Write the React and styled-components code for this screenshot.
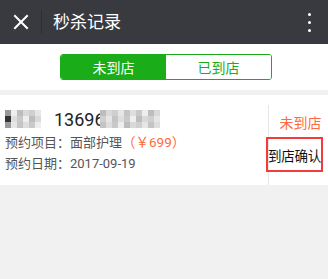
import React, { useState } from "react";
import styled, { createGlobalStyle } from "styled-components";

const GlobalStyle = createGlobalStyle`
  html, body {
    margin: 0;
    padding: 0;
    background: #f1f1f1;
    font-family: Roboto, "Noto Sans CJK SC", sans-serif;
  }
`;

const Page = styled.div`
  width: 328px;
  min-height: 279px;
  background: #f1f1f1;
`;

const Header = styled.div`
  height: 44px;
  background: #393a3f;
  display: flex;
  align-items: center;
  color: #ffffff;
`;

const CloseBtn = styled.div`
  width: 40px;
  height: 44px;
  display: flex;
  align-items: center;
  justify-content: center;
  padding-left: 1px;
`;

const Divider = styled.div`
  width: 1px;
  height: 24px;
  background: #2e2f33;
`;

const Title = styled.div`
  flex: 1;
  padding-left: 11px;
  font-size: 17px;
  line-height: 44px;
`;

const MoreBtn = styled.div`
  width: 36px;
  height: 44px;
  display: flex;
  flex-direction: column;
  align-items: center;
  justify-content: center;
  gap: 5px;
  margin-right: 1px;

  span {
    width: 3px;
    height: 3px;
    border-radius: 50%;
    background: #ffffff;
  }
`;

const TabBar = styled.div`
  background: #ffffff;
  padding: 10px 0 10px 60px;
`;

const Segment = styled.div`
  display: flex;
  width: 210px;
  height: 24px;
  border: 1px solid #1aad19;
  border-radius: 3px;
  overflow: hidden;
`;

const SegmentItem = styled.div`
  flex: 1;
  display: flex;
  align-items: center;
  justify-content: center;
  font-size: 14px;
  background: ${({ active }) => (active ? "#1aad19" : "#ffffff")};
  color: ${({ active }) => (active ? "#ffffff" : "#1aad19")};
  cursor: pointer;
`;

const Card = styled.div`
  margin-top: 5px;
  height: 90px;
  background: #ffffff;
  display: flex;
`;

const Info = styled.div`
  flex: 1;
  padding: 11px 0 0 5px;
`;

const NameRow = styled.div`
  display: flex;
  align-items: center;
  height: 26px;
  font-size: 18px;
  color: #222222;
`;

const Mosaic = styled.div`
  display: grid;
  grid-template-columns: repeat(${({ cols }) => cols}, 6px);
  grid-auto-rows: 6px;
  margin-left: ${({ gap }) => gap || 0}px;
  filter: blur(0.6px);
`;

const Cell = styled.span`
  background: ${({ shade }) => shade};
`;

const Phone = styled.span`
  margin-left: 13px;
`;

const Line = styled.div`
  font-size: 13px;
  line-height: 21px;
  color: #555555;
  white-space: nowrap;
`;

const Price = styled.span`
  color: #ff6a3d;
  font-size: 13.5px;
`;

const Side = styled.div`
  width: 59px;
  margin-top: 10px;
  border-left: 1px solid #e6e6e6;
  display: flex;
  flex-direction: column;
  align-items: flex-start;
`;

const Status = styled.div`
  width: 100%;
  text-align: center;
  font-size: 14px;
  line-height: 20px;
  color: #ff6a3d;
  margin-top: 8px;
  padding-left: 2px;
`;

const ConfirmBox = styled.div`
  margin: 4px 0 0 -3px;
  width: 53px;
  height: 31px;
  border: 2px solid #f23b3b;
  display: flex;
  align-items: center;
  justify-content: center;
  font-size: 13.5px;
  color: #111111;
  white-space: nowrap;
  letter-spacing: -0.3px;
`;

const shades = ["#d9d9d9", "#c9c9c9", "#e6e6e6", "#bdbdbd", "#dedede", "#cfcfcf", "#eeeeee", "#c4c4c4"];

const MosaicBlock = ({ cols, rows, gap, seed, edge }) => {
  const cells = [];
  for (let i = 0; i < cols * rows; i++) {
    const shade = edge && i % cols === 0 ? (i === cols ? "#333333" : "#9a9a9a") : shades[(i * 5 + seed) % shades.length];
    cells.push(<Cell key={i} shade={shade} />);
  }
  return (
    <Mosaic cols={cols} gap={gap}>
      {cells}
    </Mosaic>
  );
};

const App = () => {
  const [tab, setTab] = useState(0);

  return (
    <Page>
      <GlobalStyle />
      <Header>
        <CloseBtn>
          <svg width="16" height="16" viewBox="0 0 16 16">
            <path d="M2 2 L14 14 M14 2 L2 14" stroke="#fff" strokeWidth="2" strokeLinecap="square" />
          </svg>
        </CloseBtn>
        <Divider />
        <Title>秒杀记录</Title>
        <MoreBtn>
          <span />
          <span />
          <span />
        </MoreBtn>
      </Header>

      <TabBar>
        <Segment>
          <SegmentItem active={tab === 0} onClick={() => setTab(0)}>
            未到店
          </SegmentItem>
          <SegmentItem active={tab === 1} onClick={() => setTab(1)}>
            已到店
          </SegmentItem>
        </Segment>
      </TabBar>

      <Card>
        <Info>
          <NameRow>
            <MosaicBlock cols={6} rows={3} seed={1} edge />
            <Phone>13696</Phone>
            <MosaicBlock cols={10} rows={3} gap={-5} seed={3} />
          </NameRow>
          <Line>
            预约项目：面部护理<Price>（￥699）</Price>
          </Line>
          <Line>预约日期：2017-09-19</Line>
        </Info>
        <Side>
          <Status>未到店</Status>
          <ConfirmBox>到店确认</ConfirmBox>
        </Side>
      </Card>
    </Page>
  );
};

export default App;
